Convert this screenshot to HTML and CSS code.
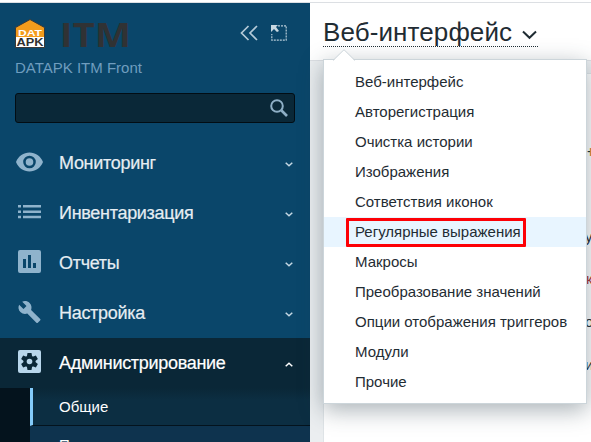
FILE: index.html
```html
<!DOCTYPE html>
<html lang="ru">
<head>
<meta charset="utf-8">
<title>DATAPK ITM</title>
<link rel="stylesheet" href="styles.css">
</head>
<body>
<div class="app">
  <aside class="sidebar">
    <div class="brand">
      <svg class="logo" width="30" height="29" viewBox="0 0 30 29">
        <path d="M.5 8.500 15 .5l14.500 8v20H.5z" fill="#f39c1c" stroke="#3a3938"/>
        <path d="M1 18h28v10H1z" fill="#fff"/>
        <text x="3" y="16.500" textLength="24" lengthAdjust="spacingAndGlyphs" class="logo-top">DAT</text>
        <text x="1.500" y="26.500" textLength="27" lengthAdjust="spacingAndGlyphs" class="logo-bottom">APK</text>
      </svg>
      <span class="product">ITM</span>
      <svg class="collapse" width="18" height="16" viewBox="0 0 18 16"><path d="M8.500 1 1.500 8l7 7M17 1l-7 7 7 7" fill="none" stroke="#b5cad8" stroke-width="1.700"/></svg>
      <svg class="compact" width="16" height="16" viewBox="0 0 16 16"><path d="M7 .8h8.200v14.400H.8V9" fill="none" stroke="#b5cad8" stroke-width="1.200" stroke-dasharray="2 1"/><path d="M0 0h7L5 2l3 4-2 1-3-3-3 3z" fill="#c8d8e2"/></svg>
    </div>
    <div class="server">DATAPK ITM Front</div>
    <div class="search"><svg width="18" height="18" viewBox="0 0 18 18" fill="none" stroke="#8eafc6"><circle cx="7" cy="7" r="5.800" stroke-width="2"/><path d="m11.500 11.500 5.500 5.500" stroke-width="2.600"/></svg></div>
    <nav>
      <div class="item"><svg class="icon" viewBox="0 0 28 24"><path fill-rule="evenodd" d="M0 12C2.500 6 7.500 2.500 13.500 2.500S24.500 6 27 12c-2.500 6-7.500 9.500-13.500 9.500S2.500 18 0 12zm13.500-6.300a6.300 6.300 0 1 0 0 12.600 6.300 6.300 0 0 0 0-12.600zm0 2.500a3.800 3.800 0 1 1 0 7.600 3.800 3.800 0 0 1 0-7.600z"/></svg><span>Мониторинг</span><svg class="chev" viewBox="0 0 8 5"><path d="m.7.800 3.300 3 3.300-3"/></svg></div>
      <div class="item"><svg class="icon" viewBox="0 0 28 24"><path d="M2 5h3v2.500H2zm5 0h18v2.500H7zM2 10.500h3V13H2zm5 0h18V13H7zM2 15.700h3v2.500H2zm5 0h18v2.500H7z"/></svg><span>Инвентаризация</span><svg class="chev" viewBox="0 0 8 5"><path d="m.7.800 3.300 3 3.300-3"/></svg></div>
      <div class="item"><svg class="icon" viewBox="0 0 28 24"><path fill-rule="evenodd" d="M4 0h19a2 2 0 0 1 2 2v19a2 2 0 0 1-2 2H4a2 2 0 0 1-2-2V2a2 2 0 0 1 2-2zm3 9v9h3V9zm5-4v13h3V5zm5 8v5h3v-5z"/></svg><span>Отчеты</span><svg class="chev" viewBox="0 0 8 5"><path d="m.7.800 3.300 3 3.300-3"/></svg></div>
      <div class="item"><svg class="icon" viewBox="0 0 28 24"><path transform="translate(1.500 0)" d="m22.700 19-9.100-9.100c.9-2.300.4-5-1.500-6.900-2-2-5-2.400-7.400-1.300L9 6 6 9 1.600 4.700C.4 7.100.9 10.100 2.900 12.100c1.900 1.900 4.600 2.400 6.900 1.500l9.100 9.100c.4.400 1 .4 1.400 0l2.300-2.300c.5-.4.500-1.100.1-1.400z"/></svg><span>Настройка</span><svg class="chev" viewBox="0 0 8 5"><path d="m.7.800 3.300 3 3.300-3"/></svg></div>
      <div class="item active"><svg class="icon" viewBox="0 0 28 24"><rect x="2" width="23" height="23" rx="2"/><g class="gear" transform="translate(13.500 11.500)"><circle r="6"/><path id="t" d="M-2-8.500h4l.7 4h-5.400zM-2 8.500h4l.7-4h-5.400z"/><use href="#t" transform="rotate(60)"/><use href="#t" transform="rotate(120)"/></g><circle cx="13.500" cy="11.500" r="2.800"/></svg><span>Администрирование</span><svg class="chev" viewBox="0 0 8 5"><path d="m.7 4.200 3.300-3 3.300 3"/></svg></div>
    </nav>
    <div class="submenu">
      <div class="sub selected">Общие</div>
      <div class="sub">Прокси</div>
    </div>
  </aside>
  <main class="main">
    <header class="header"><h1 class="title"><span>Веб-интерфейс</span><svg width="15" height="10" viewBox="0 0 15 10"><path d="m1 1.500 6.500 6.300L14 1.500" fill="none" stroke="#1f2c33" stroke-width="2"/></svg></h1></header>
    <div class="content"><div class="panel">
      <div class="frag orange"><b>-</b>н</div><div class="frag second">у</div><div class="frag red">к</div><div class="frag">о</div><div class="frag">и</div>
    </div></div>
    <div class="menu">
      <svg class="pointer" width="22" height="12" viewBox="0 0 22 12"><path d="M0 12 11 1l11 11z" fill="#fff"/><path d="M0 11.500 11 .7l11 10.800" fill="none" stroke="#ccd5da"/></svg>
      <div class="opt">Веб-интерфейс</div>
      <div class="opt">Авторегистрация</div>
      <div class="opt">Очистка истории</div>
      <div class="opt">Изображения</div>
      <div class="opt">Сответствия иконок</div>
      <div class="opt hover">Регулярные выражения<i class="mark"></i></div>
      <div class="opt">Макросы</div>
      <div class="opt">Преобразование значений</div>
      <div class="opt">Опции отображения триггеров</div>
      <div class="opt">Модули</div>
      <div class="opt">Прочие</div>
    </div>
  </main>
</div>
</body>
</html>
```
FILE: styles.css
```css
* { box-sizing: border-box; }
body { margin: 0; font-family: "Liberation Sans", Arial, sans-serif; background: #fff; color: #1f2c33; }
.app { display: flex; height: 442px; overflow: hidden; padding-top: 2px; background: linear-gradient(#fff 2px, #dcdfe3 2px, #dcdfe3 3px, #fff 3px); }
.sidebar { width: 310px; margin-top: 1px; background: #0a466a; flex: none; }
.brand { display: flex; height: 54px; padding: 15px 22px 0 15px; }
.logo { flex: none; margin-top: 1px; }
.logo-top { font: bold 8.500px "Liberation Sans", sans-serif; fill: #fff; }
.logo-bottom { font: bold 10px "Liberation Sans", sans-serif; fill: #303030; }
.product { width: 179px; padding-left: 13px; font: bold 34px/32px "Open Sans", sans-serif; color: #303234; transform: scaleX(1.130); transform-origin: 0 0; }
.collapse { flex: none; margin: 7px 13px 0 16px; }
.compact { flex: none; margin-top: 7px; }
.server { height: 20px; padding-left: 15px; font-size: 15px; line-height: 22px; color: #6f9dbf; }
.search { display: flex; align-items: center; justify-content: flex-end; width: 280px; height: 30px; margin: 16px 0 15px 15px; padding-right: 6px; background: #0a2838; border: 1px solid #020d14; border-radius: 3px; }
.item { display: flex; align-items: center; height: 50px; padding: 0 17px 0 16px; font-size: 18px; letter-spacing: -.3px; color: #e6edf2; -webkit-text-stroke: .2px; }
.item span { flex: 1; padding-left: 15px; white-space: nowrap; }
.icon { width: 28px; height: 24px; margin-top: -2px; fill: #8fb3cc; }
.chev { width: 8px; height: 5px; margin-top: 3px; fill: none; stroke: #c5d8e4; stroke-width: 1.500; }
.active { background: #0a2737; color: #fff; }
.active .icon { fill: #b8d6eb; }
.icon .gear { fill: #0a2737; }
.active .chev { stroke: #fff; }
.submenu { padding-left: 30px; background: #04131d; }
.sub { height: 38px; padding-left: 29px; border-bottom: 1px solid #04131d; background: #0e334e; font-size: 15px; line-height: 38px; color: #fff; }
.selected { padding-left: 26px; border-left: 3px solid #84cbfa; background: linear-gradient(#0a2737, #0c2e42 12px); }
.main { position: relative; flex: 1; min-width: 0; padding-top: 1px; }
.header { height: 57px; padding: 14px 0 0 13px; }
.title { display: flex; align-items: flex-start; width: 215px; height: 30px; margin: 0; border-bottom: 1px dotted #1f2c33; font-size: 26px; line-height: 30px; letter-spacing: .1px; font-weight: 400; white-space: nowrap; }
.title svg { margin: 13px 1px 0 auto; }
.content { height: 382px; padding: 12px 0 0 13px; background: #ebeef0; border-top: 1px solid #dcdfe3; }
.panel { height: 100%; padding: 64px 0 0 264px; background: #fff; border: solid #dfe4e7; border-width: 1px 0 0 1px; }
.frag { height: 43px; margin-left: -3px; font-size: 15px; line-height: 26px; white-space: nowrap; }
.orange { height: 86px; margin-left: -1px; color: #d9812f; }
.orange b { display: inline-block; width: 3px; margin-right: -1px; overflow: hidden; vertical-align: top; font-weight: 400; color: #1f2c33; }
.second { height: 42px; }
.red { height: 43px; margin-left: -2px; color: #a53131; }
.menu { position: absolute; left: 13px; top: 57px; width: 264px; height: 345px; padding-top: 7px; background: #fff; border: 1px solid #ccd5da; box-shadow: 0 6px 22px rgba(39, 60, 72, .4); font-size: 15px; }
.pointer { position: absolute; left: 9px; top: -11px; }
.opt { position: relative; height: 30px; padding-left: 31px; line-height: 30px; white-space: nowrap; }
.hover { background: #e8f5ff; }
.mark { position: absolute; left: 22px; top: 1px; width: 180px; height: 29px; border: 3px solid #fd0006; border-radius: 1px; }
```
